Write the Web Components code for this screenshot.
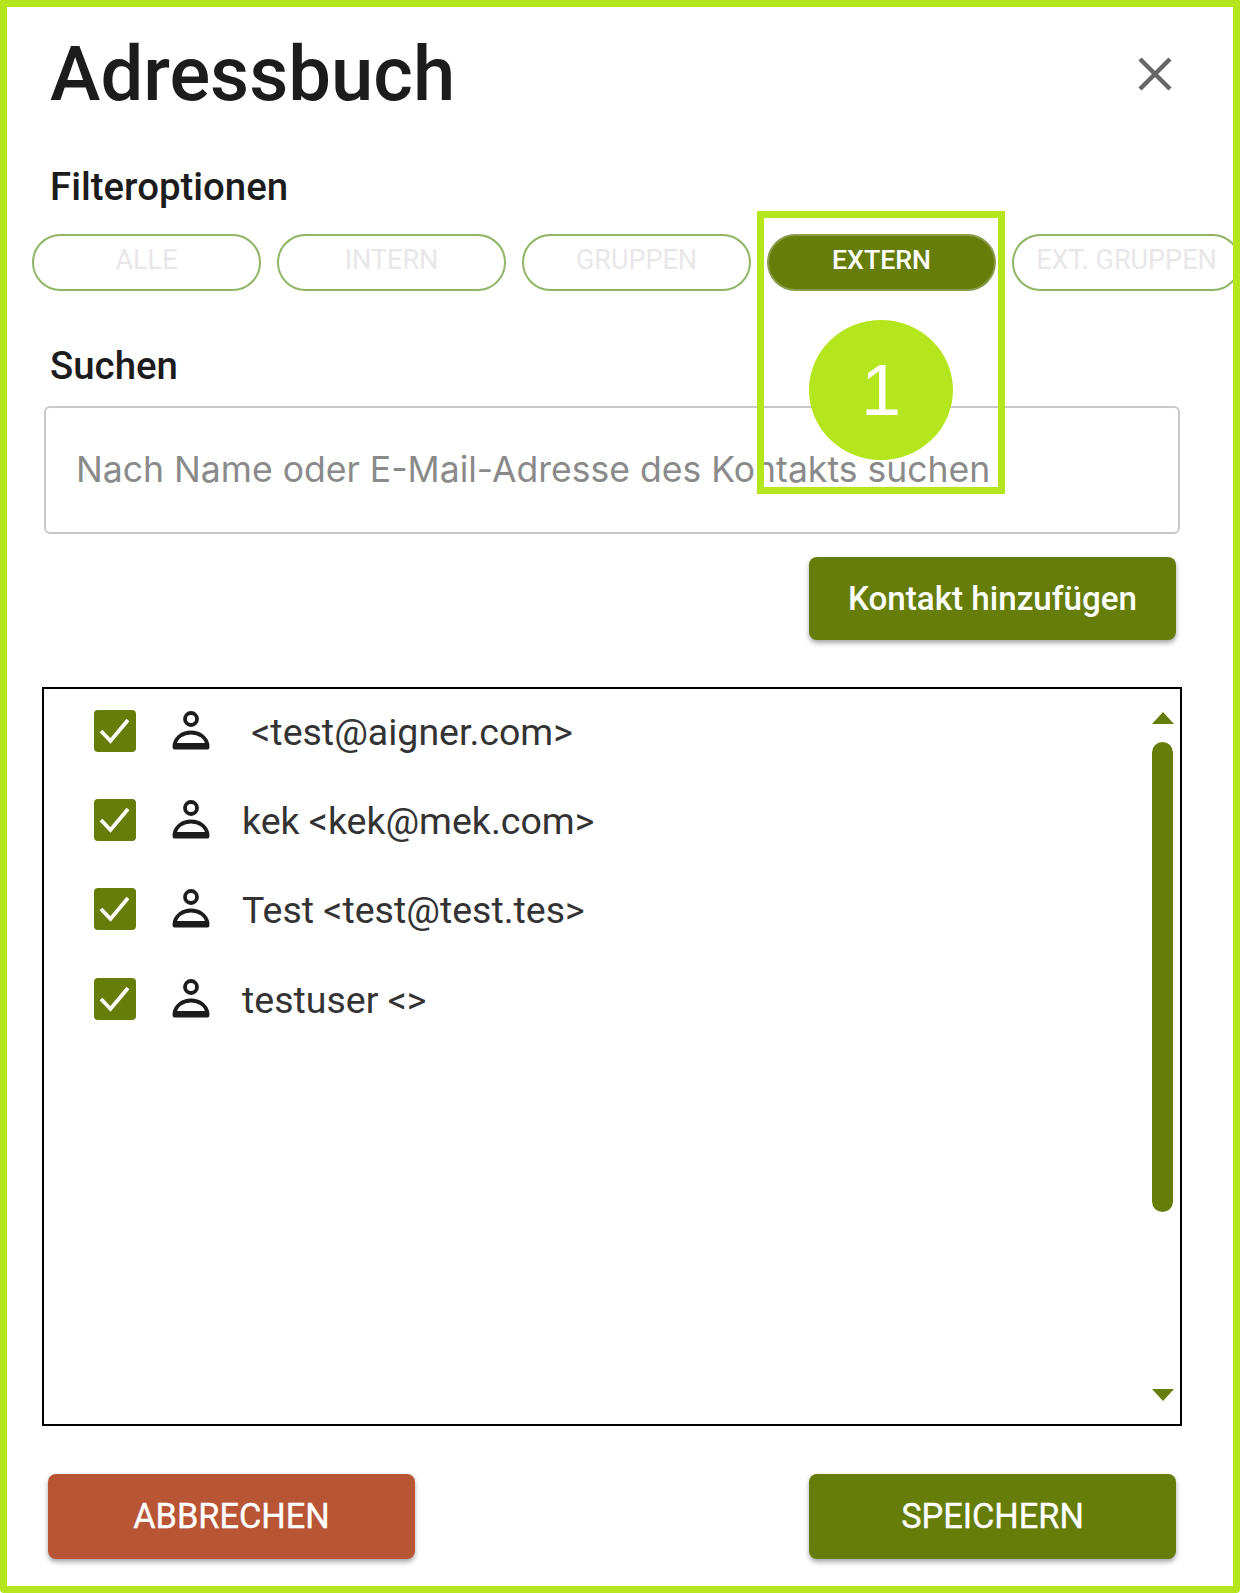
<!DOCTYPE html>
<html lang="de">
<head>
<meta charset="utf-8">
<title>Adressbuch</title>
<style>
  html, body { margin: 0; padding: 0; background: #fff; }
</style>
</head>
<body>
<address-dialog>
  <span slot="title">Adressbuch</span>
  <filter-pill>ALLE</filter-pill>
  <filter-pill>INTERN</filter-pill>
  <filter-pill>GRUPPEN</filter-pill>
  <filter-pill active>EXTERN</filter-pill>
  <filter-pill>EXT. GRUPPEN</filter-pill>
</address-dialog>

<script>
const GREEN = '#667d09';

const simple = (name, css, html) => {
  customElements.define(name, class extends HTMLElement {
    constructor () {
      super();
      this.attachShadow({ mode: 'open' }).innerHTML = `<style>${css}</style>${html}`;
    }
  });
};

simple('filter-pill', `
  :host {
    flex: none;
    display: flex;
    align-items: center;
    justify-content: center;
    box-sizing: border-box;
    width: 229px;
    height: 57px;
    padding-bottom: 6px;
    border: 2px solid #8fb565;
    border-radius: 29px;
    background: #fff;
    color: #e9e6ea;
    font: 400 27px Roboto, sans-serif;
    white-space: nowrap;
  }
  :host([active]) {
    background: ${GREEN};
    border-color: #8a9c4c;
    color: #fff;
    font-weight: 500;
    font-size: 26.7px;
  }
`, '<slot></slot>');

simple('action-button', `
  :host {
    display: flex;
    align-items: center;
    justify-content: center;
    box-sizing: border-box;
    width: 367px;
    height: 85px;
    padding-bottom: 2px;
    border-radius: 8px;
    background: ${GREEN};
    color: #fff;
    font: 400 34.3px Roboto, sans-serif;
    -webkit-text-stroke: .35px #fff;
    box-shadow: 0 3px 5px rgba(0, 0, 0, .35);
    white-space: nowrap;
  }
  :host([danger]) { background: #b85535; }
  :host([strong]) { height: 83px; padding-bottom: 0; font-weight: 500; font-size: 33.2px; -webkit-text-stroke: 0; }
`, '<slot></slot>');

simple('contact-row', `
  :host {
    display: flex;
    align-items: center;
    height: 89.3px;
    color: #333;
    font: 400 37.5px Roboto, sans-serif;
    white-space: pre;
  }
  .box {
    flex: none;
    display: block;
    width: 42px;
    height: 42px;
    margin-left: 50px;
    border-radius: 4px;
    background: ${GREEN};
  }
  .person {
    flex: none;
    display: block;
    width: 40px;
    height: 40px;
    margin: 0 31px 0 35px;
  }
  .label { position: relative; top: 1px; }
`, `
  <svg class="box" viewBox="0 0 42 42"><path d="M7 21l9.5 10L34 10" fill="none" stroke="#fff" stroke-width="3.8"/></svg>
  <svg class="person" viewBox="0 0 40 40">
    <circle cx="20" cy="8" r="6" fill="none" stroke="#1c1c1c" stroke-width="3.8"/>
    <path d="M3.5 36.5v-2.5C5 26 12 21.5 20 21.5S35 26 36.5 34v2.5z" fill="none" stroke="#1c1c1c" stroke-width="3.8" stroke-linejoin="round"/>
    <path d="M3 32h34v6H3z" fill="#1c1c1c"/>
  </svg>
  <span class="label"><slot></slot></span>
`);

simple('scroll-rail', `
  :host {
    display: flex;
    flex-direction: column;
    align-items: center;
    box-sizing: border-box;
    width: 23px;
    height: 100%;
    padding: 23px 0 23px;
  }
  .up, .down {
    flex: none;
    width: 0;
    height: 0;
    border-left: 11.5px solid transparent;
    border-right: 11.5px solid transparent;
  }
  .up { border-bottom: 12px solid ${GREEN}; }
  .down { border-top: 12px solid ${GREEN}; margin-top: auto; }
  .thumb {
    flex: none;
    width: 21px;
    height: 470px;
    margin-top: 18px;
    border-radius: 11px;
    background: ${GREEN};
  }
`, '<div class="up"></div><div class="thumb"></div><div class="down"></div>');

simple('callout-marker', `
  :host {
    position: absolute;
    left: 750px;
    top: 204px;
    box-sizing: border-box;
    width: 248px;
    height: 283px;
    border: 7px solid #b5e61d;
    display: flex;
    justify-content: center;
  }
  .dot {
    display: flex;
    align-items: center;
    justify-content: center;
    width: 144px;
    height: 140px;
    margin: 102px 0 0 0;
    border-radius: 50%;
    background: #b5e61d;
    color: #fff;
    font: 400 72px "Liberation Sans", sans-serif;
  }
`, '<div class="dot"><slot></slot></div>');

simple('address-dialog', `
  :host {
    display: block;
    position: relative;
    box-sizing: border-box;
    width: 1240px;
    height: 1593px;
    border: 7px solid #b5e61d;
    border-radius: 0 0 4px 4px;
    background: #fff;
    overflow: hidden;
    color: #1c1c1c;
    font-family: Roboto, sans-serif;
  }
  header {
    display: flex;
    align-items: center;
    justify-content: space-between;
    height: 134px;
    margin-bottom: 26px;
    padding: 0 60px 0 43px;
  }
  h1 {
    margin: 0;
    font: 500 76px/90px Roboto, sans-serif;
  }
  header svg { display: block; width: 36px; height: 36px; }
  h2 {
    margin: 0 0 0 43px;
    font: 500 38.4px/40px Roboto, sans-serif;
  }
  .pills {
    display: flex;
    gap: 16px;
    margin: 27px 0 0 25px;
    width: 1300px;
  }
  .search-head { margin-top: 55px; }
  .search {
    box-sizing: border-box;
    height: 128px;
    margin: 20px 53px 0 37px;
    padding: 34px 0 0 30px;
    border: 2px solid #c8c8c8;
    border-radius: 6px;
    color: #8a8a8a;
    font: 400 35.55px/56px Inter, sans-serif;
    white-space: nowrap;
  }
  .add { display: flex; justify-content: flex-end; margin: 23px 57px 0 0; }
  .list {
    display: flex;
    box-sizing: border-box;
    height: 739px;
    margin: 47px 51px 0 35px;
    border: 2px solid #000;
  }
  .rows { flex: 1; margin-top: -3px; }
  .rail { padding-right: 6px; }
  footer {
    display: flex;
    justify-content: space-between;
    margin: 48px 57px 0 41px;
  }
`, `
  <header>
    <h1><slot name="title"></slot></h1>
    <svg viewBox="0 0 36 36"><path d="M3 3l30 30M33 3L3 33" stroke="#666" stroke-width="4.5" fill="none"/></svg>
  </header>
  <h2>Filteroptionen</h2>
  <div class="pills"><slot></slot></div>
  <h2 class="search-head">Suchen</h2>
  <div class="search">Nach Name oder E-Mail-Adresse des Kontakts suchen</div>
  <div class="add"><action-button strong>Kontakt hinzufügen</action-button></div>
  <div class="list">
    <div class="rows">
      <contact-row> &lt;test@aigner.com&gt;</contact-row>
      <contact-row>kek &lt;kek@mek.com&gt;</contact-row>
      <contact-row>Test &lt;test@test.tes&gt;</contact-row>
      <contact-row>testuser &lt;&gt;</contact-row>
    </div>
    <div class="rail"><scroll-rail></scroll-rail></div>
  </div>
  <footer>
    <action-button danger>ABBRECHEN</action-button>
    <action-button>SPEICHERN</action-button>
  </footer>
  <callout-marker>1</callout-marker>
`);
</script>
</body>
</html>
